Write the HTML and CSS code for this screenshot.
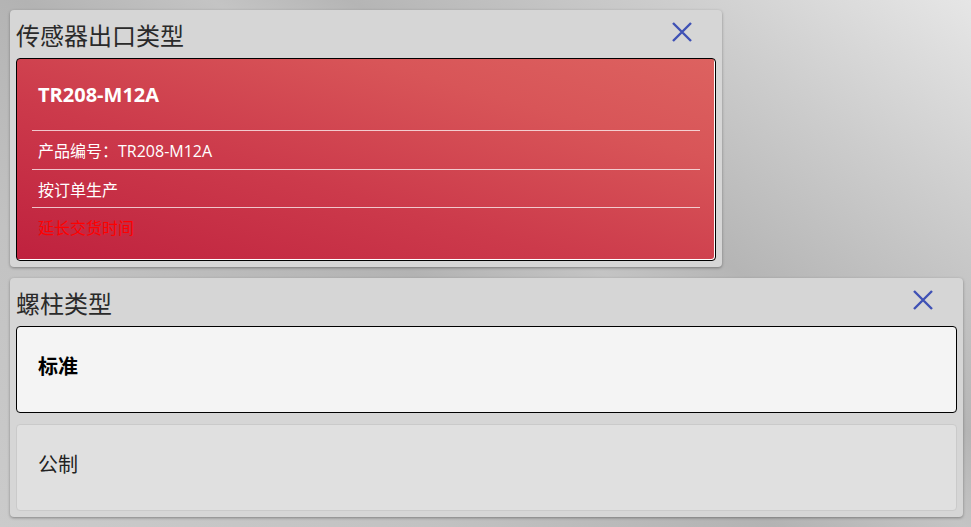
FILE: index.html
```html
<!DOCTYPE html>
<html lang="zh-CN">
<head>
<meta charset="utf-8">
<title>传感器出口类型</title>
<link rel="stylesheet" href="styles.css">
</head>
<body>
<div class="page">
  <section class="panel panel-narrow">
    <header class="panel-head">
      <h2 class="panel-title">传感器出口类型</h2>
      <button class="close" aria-label="关闭">
        <svg width="22" height="22" viewBox="0 0 22 22"><path d="M2 2 L20 20 M20 2 L2 20" stroke="#3f51b5" stroke-width="2.4" fill="none"/></svg>
      </button>
    </header>
    <div class="product-card">
      <div class="product-name">TR208-M12A</div>
      <div class="product-row">产品编号：TR208-M12A</div>
      <div class="product-row">按订单生产</div>
      <div class="product-row warn">延长交货时间</div>
    </div>
  </section>

  <section class="panel">
    <header class="panel-head">
      <h2 class="panel-title">螺柱类型</h2>
      <button class="close" aria-label="关闭">
        <svg width="22" height="22" viewBox="0 0 22 22"><path d="M2 2 L20 20 M20 2 L2 20" stroke="#3f51b5" stroke-width="2.4" fill="none"/></svg>
      </button>
    </header>
    <div class="options">
      <div class="option selected">标准</div>
      <div class="option">公制</div>
    </div>
  </section>
</div>
</body>
</html>
```

FILE: styles.css
```css
* { box-sizing: border-box; }
html, body { margin: 0; height: 100%; }
body {
  font-family: "Open Sans", "Noto Sans CJK SC", sans-serif;
  background: linear-gradient(215deg, #e6e6e6 0%, #cdcdcd 18%, #b5b5b5 36%, #c4c4c4 44%, #b3b3b3 55%, #c2c2c2 75%, #cbcbcb 100%);
  overflow: hidden;
}
.page {
  padding: 10px 8px 10px 10px;
  display: flex;
  flex-direction: column;
  gap: 11px;
  align-items: flex-start;
}
.panel {
  background: #d6d6d6;
  border-radius: 4px;
  box-shadow: 0 1px 3px rgba(0,0,0,0.35);
  padding: 0 6px 6px 6px;
  width: 953px;
}
.panel-narrow { width: 712px; }
.panel-head {
  height: 48px;
  display: flex;
  align-items: center;
  justify-content: space-between;
}
.panel-title {
  margin: 0;
  font-family: "Noto Sans CJK SC", sans-serif;
  font-weight: 400;
  font-size: 24px;
  color: #2a2a2a;
  line-height: 1;
  padding-top: 1px;
}
.close {
  border: 0;
  background: none;
  padding: 0;
  margin: -4px 23px 0 0;
  width: 22px;
  height: 22px;
  display: flex;
  cursor: pointer;
}
.product-card {
  background: linear-gradient(to top right, #bf213e 0%, #cc3a4b 40%, #d85558 75%, #dd6260 100%);
  border: 1px solid #000;
  border-radius: 4px;
  box-shadow: inset -1px -1px 0 #fff;
  padding: 0 15px 15px 15px;
  color: #fff;
}
.product-name {
  height: 71px;
  line-height: 72px;
  padding: 0 6px;
  font-weight: 700;
  font-size: 20px;
}
.product-row {
  border-top: 1px solid rgba(255,255,255,0.72);
  height: 39px;
  line-height: 40px;
  padding: 0 6px;
  font-size: 16px;
}
.product-row + .product-row { height: 38px; }
.warn { color: #ff0000; }
.options {
  display: flex;
  flex-direction: column;
  gap: 11px;
}
.option {
  height: 87px;
  display: flex;
  align-items: center;
  padding: 0 0 8px 21px;
  border-radius: 4px;
  border: 1px solid #cacaca;
  background: #e0e0e0;
  font-family: "Noto Sans CJK SC", sans-serif;
  font-size: 20px;
  color: #222;
}
.option.selected {
  background: #f4f4f4;
  border-color: #000;
  font-weight: 700;
  color: #000;
}
```
